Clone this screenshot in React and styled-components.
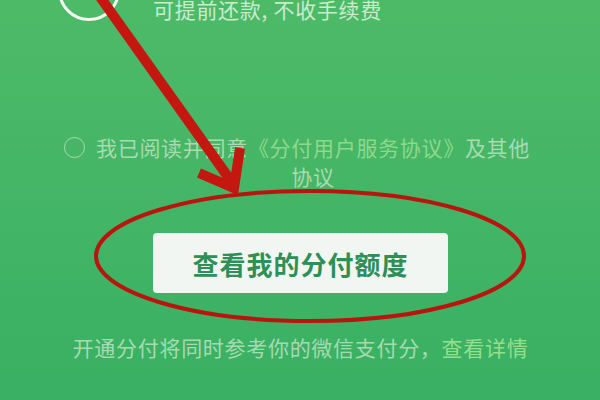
import styled, { createGlobalStyle } from 'styled-components'

const Global = createGlobalStyle`
  html, body {
    margin: 0;
    padding: 0;
  }
  body {
    font-family: "Noto Sans CJK SC", "Noto Sans", sans-serif;
  }
`

const Page = styled.div`
  position: relative;
  width: 600px;
  height: 400px;
  overflow: hidden;
  background: linear-gradient(180deg, #4dba68 0%, #44b566 50%, #39b063 100%);
`

const TopRow = styled.div`
  display: flex;
  align-items: flex-start;
  margin-top: -41px;
  padding-left: 58px;
`

const BigCircle = styled.div`
  width: 62px;
  height: 62px;
  box-sizing: border-box;
  border-radius: 50%;
  border: 3.5px solid #f1f9f2;
  flex-shrink: 0;
`

const Text = styled.div`
  font-size: 21px;
  letter-spacing: 0.7px;
  line-height: ${p => p.$lh || 29}px;
  color: ${p => p.$color || '#a8dbb0'};
  white-space: ${p => (p.$nowrap ? 'nowrap' : 'normal')};
`

const TopText = styled(Text)`
  margin-left: 33px;
  margin-top: 40px;
`

const Agreement = styled.div`
  display: flex;
  align-items: flex-start;
  margin-top: 112px;
  padding-left: 64px;
`

const Radio = styled.div`
  width: 21px;
  height: 21px;
  box-sizing: border-box;
  border-radius: 50%;
  border: 1.6px solid #a8dbb0;
  margin-top: 4px;
  flex-shrink: 0;
`

const AgreementText = styled(Text)`
  width: 440px;
  margin-left: 8px;
  text-align: center;
`

const Link = styled.span`
  color: ${p => p.$color || '#8ed98c'};
`

const Button = styled.div`
  display: flex;
  align-items: center;
  justify-content: center;
  width: 295px;
  height: 60px;
  margin: 42px auto 0;
  background: #f1f6f2;
  border-radius: 4px;
  color: #2e8f57;
  font-size: 26px;
  font-weight: 700;
  letter-spacing: 1px;
  padding-left: 1px;
  box-sizing: border-box;
`

const Footer = styled(Text)`
  margin-top: 40px;
  text-align: center;
  padding-left: 1px;
`

const Overlay = styled.svg`
  position: absolute;
  left: 0;
  top: 0;
  pointer-events: none;
`

export default function App() {
  return (
    <>
      <Global />
      <Page>
        <TopRow>
          <BigCircle />
          <TopText $color="#c9eccd" $lh={20} $nowrap>
            可提前还款, 不收手续费
          </TopText>
        </TopRow>

        <Agreement>
          <Radio />
          <AgreementText>
            我已阅读并同意<Link>《分付用户服务协议》</Link>及其他协议
          </AgreementText>
        </Agreement>

        <Button>查看我的分付额度</Button>

        <Footer $color="#a6dbb1">
          开通分付将同时参考你的微信支付分，<Link $color="#95df8c">查看详情</Link>
        </Footer>

        <Overlay width="600" height="400" viewBox="0 0 600 400">
          <ellipse cx="310" cy="256" rx="214" ry="65" fill="none" stroke="#b8150f" strokeWidth="4" />
          <g stroke="#c4170f" strokeWidth="10" strokeLinecap="butt" fill="none">
            <line x1="98" y1="-6" x2="231" y2="181" />
            <polyline points="240,148 234,188 199,173" strokeLinejoin="miter" />
          </g>
        </Overlay>
      </Page>
    </>
  )
}
